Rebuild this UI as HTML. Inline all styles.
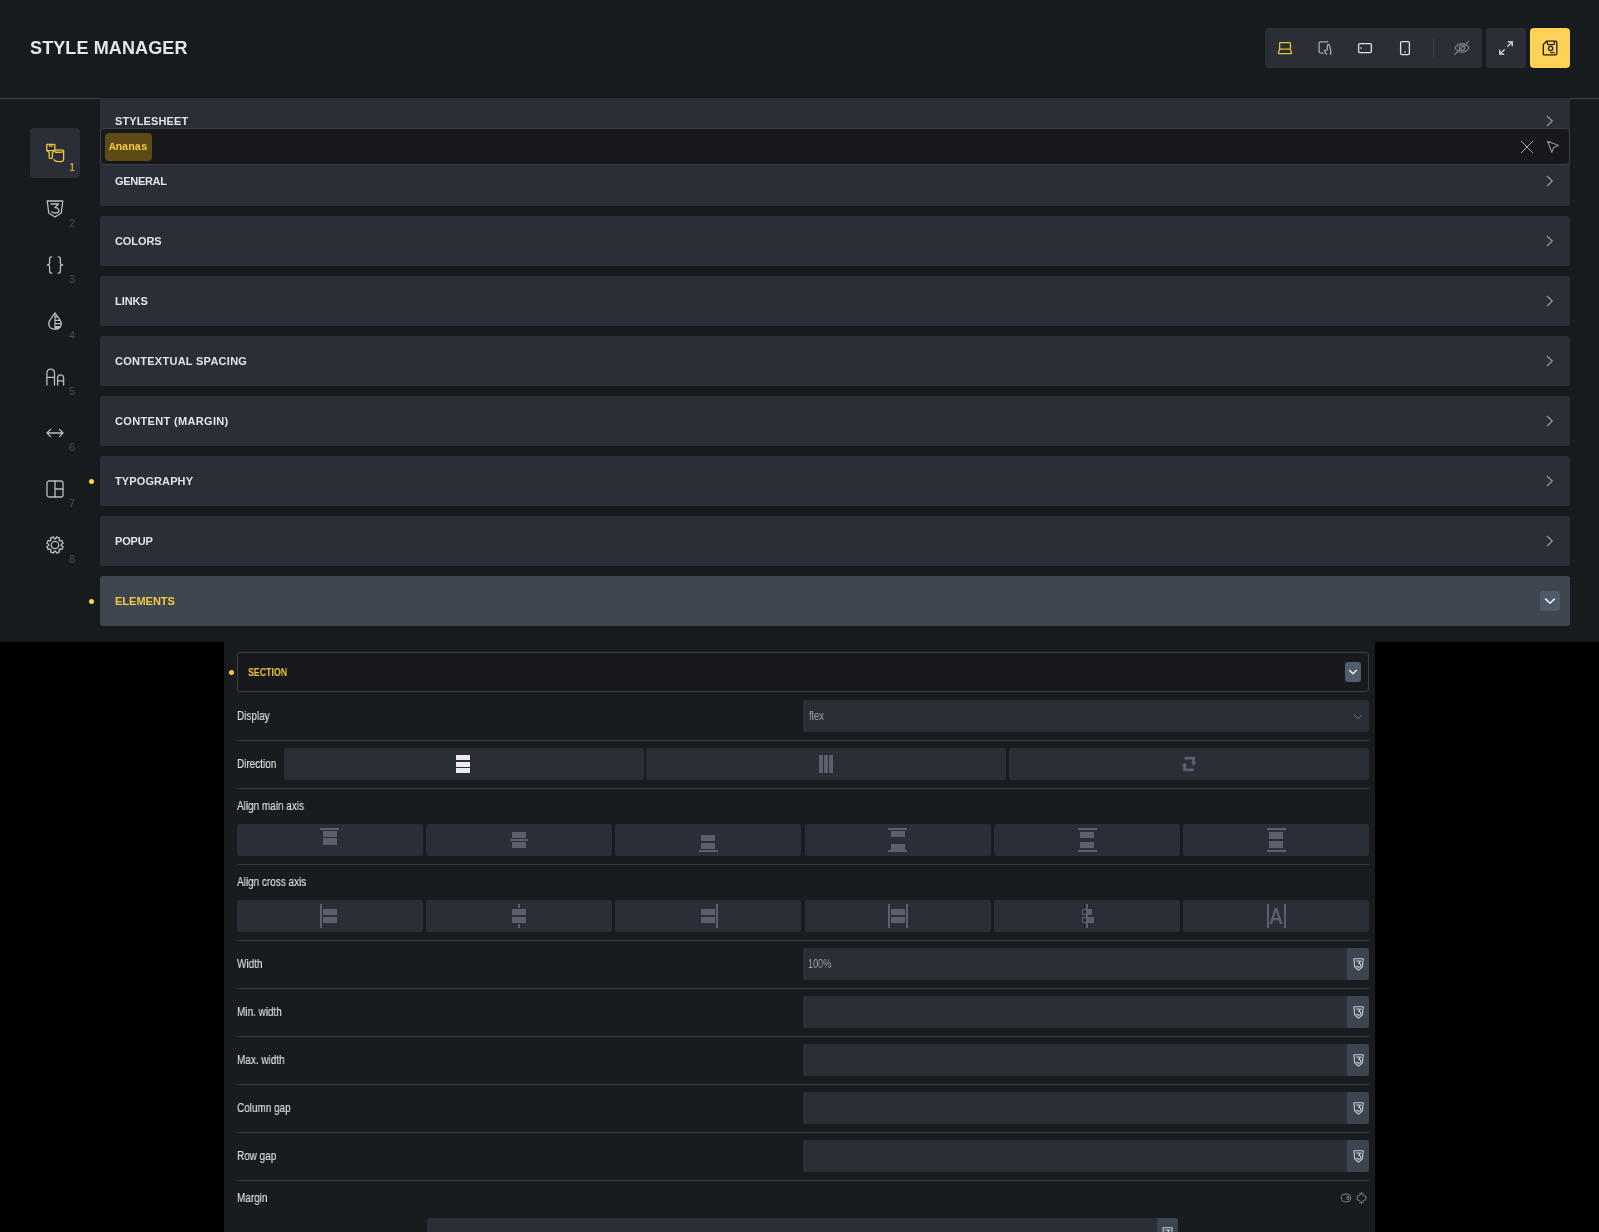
<!DOCTYPE html>
<html><head><meta charset="utf-8">
<style>
*{margin:0;padding:0;box-sizing:border-box}
html,body{width:1599px;height:1232px;overflow:hidden;background:#000;font-family:"Liberation Sans",sans-serif}
.abs{position:absolute}
#title,.lbl,.lab2,.abs{will-change:transform}
#top{position:absolute;left:0;top:0;width:1599px;height:642px;background:#181b1e}
#hdrline{position:absolute;left:0;top:98px;width:100px;height:1px;background:#3b424c}
#title{position:absolute;left:30px;top:36px;font-size:18px;font-weight:bold;color:#e4e6e8;line-height:24px;white-space:nowrap;letter-spacing:0.12px}
.grp{position:absolute;top:28px;height:40px;background:#2a2f37;border-radius:4px}
.ic{position:absolute;overflow:visible}
.row{position:absolute;left:100px;width:1470px;height:50px;background:#2a2f37;border-radius:3px}
.row .lbl{position:absolute;left:15px;top:0;line-height:50px;font-size:11px;font-weight:bold;color:#e2e4e7;white-space:nowrap;letter-spacing:0.15px}
.row svg.chev{position:absolute;left:1446px;top:19px}
.dot{position:absolute;width:5px;height:5px;border-radius:50%;background:#fdd54a}
.sb{position:absolute;left:30px;width:50px;height:50px;border-radius:4px}
.sb .n{position:absolute;left:39px;top:33px;font-size:11px;line-height:12px;color:#474c53}
#lower{position:absolute;left:224px;top:642px;width:1151px;height:590px;background:#191c1f}
.sep{position:absolute;left:12px;width:1133px;height:1px;background:#363b43}
.lab{position:absolute;left:12px;font-size:12px;color:#dcdfe2;white-space:nowrap;transform:scaleX(0.83);transform-origin:0 0;line-height:14px}
.btn{position:absolute;height:32px;background:#2a2f37;border-radius:3px}
.lab2{position:absolute;font-size:12px;color:#dfe2e5;-webkit-text-stroke:0.1px #dfe2e5;white-space:nowrap;transform:scaleX(0.83);transform-origin:0 0;line-height:14px}
.inp{position:absolute;left:579px;width:566px;height:32px;background:#2a2f37;border-radius:3px;overflow:hidden}
.inp .css{position:absolute;right:0;top:0;width:22px;height:32px;background:#3c4550}
</style></head><body>
<div id="top">
  <div id="hdrline"></div>
  <div class="abs" style="left:1570px;top:98px;width:29px;height:1px;background:#3b424c"></div>
  <div class="sb" style="top:128px;background:#2a2f37"></div>
  <svg class="ic" style="left:46px;top:143px" width="18" height="20" viewBox="0 0 18 20" fill="none" stroke="#f0c53c" stroke-width="1.3" stroke-linecap="round" stroke-linejoin="round"><path d="M0.8 1.4 H8.8 V7.6 L6.4 9.6 V14.4 Q6.4 15.4 5.4 15.4 H4.2 Q3.2 15.4 3.2 14.4 V9.6 L0.8 7.6 Z"/><path d="M0.8 7.6 H8.8"/><path d="M3.9 1.4 V3.4 M5.8 1.4 V3.4"/><path d="M9.2 7.2 Q13.6 6.4 17.6 7.4 V16.4 Q17.6 18.6 13 18.6 Q8.2 18.6 8 16.4"/><path d="M9.2 9 Q13.6 9.6 17.6 8.8"/></svg>
  <div class="abs" style="left:69px;top:161px;font-size:11px;line-height:12px;color:#e9c03f">1</div>
  <svg class="ic" style="left:46px;top:200px" width="18" height="18" viewBox="0 0 18 18" fill="none" stroke="#b8bcc1" stroke-width="1.3" stroke-linecap="round" stroke-linejoin="round"><path d="M1.2 1 H16.8 L15.2 13 L9 17 L2.8 13 Z"/><path d="M5 4 H12.6 L8.8 7.6 Q12.8 7.4 12.8 10.4 Q12.8 13 9.2 13 Q7 13 5.8 11.6"/></svg>
  <div class="abs" style="left:69px;top:217px;font-size:11px;line-height:12px;color:#474c53">2</div>
  <svg class="ic" style="left:46px;top:256px" width="18" height="18" viewBox="0 0 18 18" fill="none" stroke="#b8bcc1" stroke-width="1.3" stroke-linecap="round" stroke-linejoin="round"><path d="M5.8 0.8 Q3.6 0.8 3.6 2.8 V7 Q3.6 9 1.4 9 Q3.6 9 3.6 11 V15.2 Q3.6 17.2 5.8 17.2"/><path d="M12.2 0.8 Q14.4 0.8 14.4 2.8 V7 Q14.4 9 16.6 9 Q14.4 9 14.4 11 V15.2 Q14.4 17.2 12.2 17.2"/></svg>
  <div class="abs" style="left:69px;top:273px;font-size:11px;line-height:12px;color:#474c53">3</div>
  <svg class="ic" style="left:46px;top:312px" width="18" height="18" viewBox="0 0 18 18" fill="none" stroke="#b8bcc1" stroke-width="1.3" stroke-linecap="round" stroke-linejoin="round"><path d="M9 0.9 L13.9 7.9 Q16.2 11.2 14.7 14.2 Q13.1 17.2 9 17.2 Q4.9 17.2 3.3 14.2 Q1.8 11.2 4.1 7.9 Z"/><path d="M9 2 V17" stroke-width="1.2"/><path d="M9 4.9 H11.6 M9 8.4 H14 M9 11.6 H15.4" stroke-width="1.1" stroke-linecap="butt"/><path d="M9 14 H15.2 Q14.6 15.8 13 16.6 Q11.4 17.2 9 17.2 Z" fill="#b8bcc1" stroke="none"/></svg>
  <div class="abs" style="left:69px;top:329px;font-size:11px;line-height:12px;color:#474c53">4</div>
  <svg class="ic" style="left:46px;top:368px" width="18" height="18" viewBox="0 0 18 18" fill="none" stroke="#b8bcc1" stroke-width="1.3" stroke-linecap="round" stroke-linejoin="round"><path d="M0.9 17 V5.4 Q0.9 1.1 4.7 1.1 Q8.5 1.1 8.5 5.4 V17 M0.9 9.4 H8.5"/><path d="M11.6 17 V10.2 Q11.6 6.9 14.6 6.9 Q17.6 6.9 17.6 10.2 V17 M11.6 12.8 H17.6"/></svg>
  <div class="abs" style="left:69px;top:385px;font-size:11px;line-height:12px;color:#474c53">5</div>
  <svg class="ic" style="left:46px;top:424px" width="18" height="18" viewBox="0 0 18 18" fill="none" stroke="#b8bcc1" stroke-width="1.3" stroke-linecap="round" stroke-linejoin="round" stroke-width="1.5"><path d="M1 9 H17 M4.6 5.4 L1 9 L4.6 12.6 M13.4 5.4 L17 9 L13.4 12.6"/></svg>
  <div class="abs" style="left:69px;top:441px;font-size:11px;line-height:12px;color:#474c53">6</div>
  <svg class="ic" style="left:46px;top:480px" width="18" height="18" viewBox="0 0 18 18" fill="none" stroke="#b8bcc1" stroke-width="1.3" stroke-linecap="round" stroke-linejoin="round"><rect x="1" y="1" width="16" height="16" rx="2"/><path d="M9 1 V17 M9 9 H17"/></svg>
  <div class="abs" style="left:69px;top:497px;font-size:11px;line-height:12px;color:#474c53">7</div>
  <svg class="ic" style="left:46px;top:536px" width="18" height="18" viewBox="0 0 18 18" fill="none" stroke="#b8bcc1" stroke-width="1.3" stroke-linecap="round" stroke-linejoin="round"><path d="M9.74 2.74 L10.62 0.86 L13.61 2.10 L12.90 4.05 L13.95 5.10 L15.90 4.39 L17.14 7.38 L15.26 8.26 L15.26 9.74 L17.14 10.62 L15.90 13.61 L13.95 12.90 L12.90 13.95 L13.61 15.90 L10.62 17.14 L9.74 15.26 L8.26 15.26 L7.38 17.14 L4.39 15.90 L5.10 13.95 L4.05 12.90 L2.10 13.61 L0.86 10.62 L2.74 9.74 L2.74 8.26 L0.86 7.38 L2.10 4.39 L4.05 5.10 L5.10 4.05 L4.39 2.10 L7.38 0.86 L8.26 2.74 Z"/><circle cx="9" cy="9" r="3.7"/></svg>
  <div class="abs" style="left:69px;top:553px;font-size:11px;line-height:12px;color:#474c53">8</div>
  <div id="title">STYLE MANAGER</div>
  <div class="row" style="top:96px"><span class="lbl" style="letter-spacing:0.12px">STYLESHEET</span><svg class="chev" width="8" height="12" viewBox="0 0 8 12" fill="none" stroke="#8d939a" stroke-width="1.3"><path d="M1 1 L6.2 6 L1 11"/></svg></div>
  <div class="row" style="top:156px"><span class="lbl" style="letter-spacing:-0.3px">GENERAL</span><svg class="chev" width="8" height="12" viewBox="0 0 8 12" fill="none" stroke="#8d939a" stroke-width="1.3"><path d="M1 1 L6.2 6 L1 11"/></svg></div>
  <div class="row" style="top:216px"><span class="lbl" style="letter-spacing:-0.08px">COLORS</span><svg class="chev" width="8" height="12" viewBox="0 0 8 12" fill="none" stroke="#8d939a" stroke-width="1.3"><path d="M1 1 L6.2 6 L1 11"/></svg></div>
  <div class="row" style="top:276px"><span class="lbl" style="letter-spacing:-0.07px">LINKS</span><svg class="chev" width="8" height="12" viewBox="0 0 8 12" fill="none" stroke="#8d939a" stroke-width="1.3"><path d="M1 1 L6.2 6 L1 11"/></svg></div>
  <div class="row" style="top:336px"><span class="lbl" style="letter-spacing:0.27px">CONTEXTUAL SPACING</span><svg class="chev" width="8" height="12" viewBox="0 0 8 12" fill="none" stroke="#8d939a" stroke-width="1.3"><path d="M1 1 L6.2 6 L1 11"/></svg></div>
  <div class="row" style="top:396px"><span class="lbl" style="letter-spacing:0.34px">CONTENT (MARGIN)</span><svg class="chev" width="8" height="12" viewBox="0 0 8 12" fill="none" stroke="#8d939a" stroke-width="1.3"><path d="M1 1 L6.2 6 L1 11"/></svg></div>
  <div class="row" style="top:456px"><span class="lbl" style="letter-spacing:0.11px">TYPOGRAPHY</span><svg class="chev" width="8" height="12" viewBox="0 0 8 12" fill="none" stroke="#8d939a" stroke-width="1.3"><path d="M1 1 L6.2 6 L1 11"/></svg></div>
  <div class="row" style="top:516px"><span class="lbl" style="letter-spacing:-0.15px">POPUP</span><svg class="chev" width="8" height="12" viewBox="0 0 8 12" fill="none" stroke="#8d939a" stroke-width="1.3"><path d="M1 1 L6.2 6 L1 11"/></svg></div>
  <div class="row" style="top:576px;background:#3e4650"><span class="lbl" style="color:#f3c846;letter-spacing:0">ELEMENTS</span>
    <div class="abs" style="left:1440px;top:15px;width:20px;height:20px;border-radius:3px;background:#4e5a67"></div>
    <svg class="abs" style="left:1444px;top:19px" width="12" height="12" viewBox="0 0 12 12" fill="none" stroke="#f2f3f5" stroke-width="1.5"><path d="M1.2 3.6 L6 8.2 L10.8 3.6"/></svg>
  </div>
  <div class="dot" style="left:89px;top:479px"></div>
  <div class="dot" style="left:89px;top:599px"></div>
  <div class="abs" style="left:100px;top:96px;width:1470px;height:2px;background:#181b1e"></div>
  <div class="abs" style="left:100px;top:128px;width:1470px;height:37px;background:#16181b;border:1px solid #3a4049;border-radius:4px"></div>
  <div class="abs" style="left:105px;top:133px;width:47px;height:28px;background:#5e4a16;border-radius:4px"></div>
  <div class="abs" style="left:108.5px;top:132.5px;line-height:28px;font-size:11px;font-family:'Liberation Mono',monospace;font-weight:bold;color:#f4c941;white-space:nowrap;letter-spacing:-0.2px">Ananas</div>
  <svg class="ic" style="left:1520px;top:140px" width="14" height="14" viewBox="0 0 14 14" fill="none" stroke="#a4a9af" stroke-width="1"><path d="M1 1 L13 13 M13 1 L1 13"/></svg>
  <svg class="ic" style="left:1546px;top:140px" width="14" height="14" viewBox="0 0 14 14" fill="none" stroke="#8f959c" stroke-width="1.1" stroke-linejoin="round"><path d="M1.6 1.2 L12.6 5.4 L7.6 7.4 L5.8 12.4 Z"/></svg>

  <div class="grp" style="left:1265px;width:217px"></div>
  <div class="grp" style="left:1486px;width:40px"></div>
  <div class="grp" style="left:1530px;width:40px;background:#fdd257"></div>
  <!-- laptop -->
  <svg class="ic" style="left:1277px;top:40px" width="16" height="16" viewBox="0 0 16 16" fill="none" stroke="#e8bf3c" stroke-width="1.3" stroke-linejoin="round">
    <rect x="2.6" y="2.6" width="10.8" height="6.6" rx="0.8"/>
    <path d="M2.6 9.2 L1.4 13 Q1.3 13.6 1.9 13.6 H14.1 Q14.7 13.6 14.6 13 L13.4 9.2"/>
  </svg>
  <!-- tablet touch -->
  <svg class="ic" style="left:1317px;top:40px" width="16" height="16" viewBox="0 0 16 16" fill="none" stroke="#a3a8ae" stroke-width="1.3" stroke-linejoin="round" stroke-linecap="round">
    <path d="M10.8 1.8 H3.6 Q2.1 1.8 2.1 3.3 V11.6 Q2.1 13.1 3.6 13.1 H6.4"/>
    <path d="M9.6 14.4 L7.7 11.3 Q7.3 10.5 8.2 10.2 L10.4 9.8 V5.4 Q10.4 4.4 11.3 4.4 Q12.2 4.4 12.5 5.4 L13.7 10.4 Q14 11.6 13.6 14.4"/>
  </svg>
  <!-- phone landscape -->
  <svg class="ic" style="left:1357px;top:40px" width="16" height="16" viewBox="0 0 16 16" fill="none" stroke="#dfe1e4" stroke-width="1.3">
    <rect x="1.6" y="3.6" width="12.8" height="9" rx="1.3"/>
    <rect x="3.5" y="7.4" width="1.4" height="1.4" fill="#dfe1e4" stroke="none"/>
  </svg>
  <!-- phone portrait -->
  <svg class="ic" style="left:1397px;top:40px" width="16" height="16" viewBox="0 0 16 16" fill="none" stroke="#dfe1e4" stroke-width="1.3">
    <rect x="3.6" y="1.6" width="8.8" height="13" rx="1.3"/>
    <rect x="7.3" y="11.3" width="1.4" height="1.4" fill="#dfe1e4" stroke="none"/>
  </svg>
  <div class="abs" style="left:1433px;top:38px;width:1px;height:20px;background:#3b414a"></div>
  <!-- eye off -->
  <svg class="ic" style="left:1454px;top:40px" width="16" height="16" viewBox="0 0 16 16" fill="none" stroke="#7c828a" stroke-width="1.2" stroke-linecap="round">
    <path d="M1 8 C4.4 2.2 11.6 2.2 15 8 C11.6 13.8 4.4 13.8 1 8 Z"/>
    <circle cx="8" cy="8" r="2.7"/>
    <path d="M0.6 14.6 L14.6 1.4"/>
  </svg>
  <!-- expand -->
  <svg class="ic" style="left:1498px;top:40px" width="16" height="16" viewBox="0 0 16 16" fill="none" stroke="#eceef0" stroke-width="1.25" stroke-linecap="butt">
    <path d="M2.4 13.6 L6.6 9.4"/><path d="M9.4 6.6 L13.6 2.4"/>
    <path d="M9.8 1.8 H14.2 V6.2"/>
    <path d="M6.2 14.2 H1.8 V9.8"/>
  </svg>
  <!-- save -->
  <svg class="ic" style="left:1542px;top:40px" width="16" height="16" viewBox="0 0 16 16" fill="none" stroke="#1b1a17" stroke-width="1.3" stroke-linejoin="round">
    <path d="M4.4 1.2 H13.8 Q14.8 1.2 14.8 2.2 V13.8 Q14.8 14.8 13.8 14.8 H2.2 Q1.3 14.8 1.3 13.9 V4.6 Z"/>
    <path d="M5.3 1.4 V3.5 Q5.3 4.6 6.4 4.6 H11.3 Q12.4 4.6 12.4 3.5 V1.4"/>
    <circle cx="8.6" cy="8.5" r="2.1"/>
    <path d="M8.2 12.6 H12.7" stroke-width="1.1"/>
  </svg>
</div>
<div id="lower"></div>
<div class="abs" style="left:237px;top:652px;width:1132px;height:40px;border:1px solid #3a3f47;border-radius:3px;background:#17191c"></div>
<div class="abs" style="left:229px;top:670px;width:5px;height:5px;border-radius:50%;background:#f5c842"></div>
<div class="abs" style="left:248px;top:665px;font-size:11px;line-height:14px;font-weight:bold;color:#efc23b;transform:scaleX(0.8);transform-origin:0 0;white-space:nowrap">SECTION</div>
<div class="abs" style="left:1345px;top:662px;width:16px;height:20px;border-radius:3px;background:#505d6c"></div>
<svg class="ic" style="left:1348px;top:667px" width="10" height="10" viewBox="0 0 10 10" fill="none" stroke="#eef0f2" stroke-width="1.4"><path d="M1.2 3 L5 6.8 L8.8 3"/></svg>
<div class="abs" style="left:237px;top:740px;width:1132px;height:1px;background:#363b43"></div>
<div class="abs" style="left:237px;top:788px;width:1132px;height:1px;background:#363b43"></div>
<div class="abs" style="left:237px;top:864px;width:1132px;height:1px;background:#363b43"></div>
<div class="abs" style="left:237px;top:940px;width:1132px;height:1px;background:#363b43"></div>
<div class="abs" style="left:237px;top:988px;width:1132px;height:1px;background:#363b43"></div>
<div class="abs" style="left:237px;top:1036px;width:1132px;height:1px;background:#363b43"></div>
<div class="abs" style="left:237px;top:1084px;width:1132px;height:1px;background:#363b43"></div>
<div class="abs" style="left:237px;top:1132px;width:1132px;height:1px;background:#363b43"></div>
<div class="abs" style="left:237px;top:1180px;width:1132px;height:1px;background:#363b43"></div>
<div class="lab2" style="left:237px;top:709px">Display</div>
<div class="btn" style="left:803px;top:700px;width:566px"></div>
<div class="abs" style="left:808.6px;top:709px;font-size:12px;line-height:14px;color:#a0a5ab;transform:scaleX(0.8);transform-origin:0 0">flex</div>
<svg class="ic" style="left:1353px;top:713px" width="10" height="8" viewBox="0 0 10 8" fill="none" stroke="#6f757c" stroke-width="1"><path d="M1 1.8 L5 5.8 L9 1.8"/></svg>
<div class="lab2" style="left:237px;top:757px">Direction</div>
<div class="btn" style="left:283.5px;top:748px;width:360px"></div>
<div class="btn" style="left:646px;top:748px;width:360px"></div>
<div class="btn" style="left:1009px;top:748px;width:360px"></div>
<div class="abs" style="left:456px;top:755px;width:14px;height:5px;background:#e9ebee"></div><div class="abs" style="left:456px;top:761.5px;width:14px;height:5px;background:#e9ebee"></div><div class="abs" style="left:456px;top:768px;width:14px;height:5px;background:#e9ebee"></div>
<div class="abs" style="left:819px;top:755px;width:4px;height:18px;background:#5a616b"></div><div class="abs" style="left:824px;top:755px;width:4px;height:18px;background:#5a616b"></div><div class="abs" style="left:829px;top:755px;width:4px;height:18px;background:#5a616b"></div>
<svg class="ic" style="left:1181px;top:756px" width="16" height="16" viewBox="0 0 16 16" fill="none" stroke="#5a616b" stroke-width="2.8"><path d="M3.4 2.2 H12.6 V7.2"/><path d="M12.9 13.9 H3.6 V9.4"/><path d="M10 6.6 L15.2 6.6 L12.6 10.2 Z" fill="#5a616b" stroke="none"/><path d="M0.8 10 L6.2 10 L3.5 6.6 Z" fill="#5a616b" stroke="none"/></svg>
<div class="lab2" style="left:237px;top:799px">Align main axis</div>
<div class="btn" style="left:237px;top:824px;width:186px"></div>
<div class="btn" style="left:237px;top:900px;width:186px"></div>
<div class="btn" style="left:426.2px;top:824px;width:186px"></div>
<div class="btn" style="left:426.2px;top:900px;width:186px"></div>
<div class="btn" style="left:615.4px;top:824px;width:186px"></div>
<div class="btn" style="left:615.4px;top:900px;width:186px"></div>
<div class="btn" style="left:804.6px;top:824px;width:186px"></div>
<div class="btn" style="left:804.6px;top:900px;width:186px"></div>
<div class="btn" style="left:993.8px;top:824px;width:186px"></div>
<div class="btn" style="left:993.8px;top:900px;width:186px"></div>
<div class="btn" style="left:1183px;top:824px;width:186px"></div>
<div class="btn" style="left:1183px;top:900px;width:186px"></div>
<div class="abs" style="left:320px;top:828px;width:19px;height:2px;background:#5a616b"></div><div class="abs" style="left:323px;top:831px;width:14px;height:6px;background:#5a616b"></div><div class="abs" style="left:323px;top:838px;width:14px;height:6.5px;background:#5a616b"></div>
<div class="abs" style="left:512px;top:832px;width:14px;height:6px;background:#5a616b"></div><div class="abs" style="left:509.7px;top:839px;width:18.4px;height:2px;background:#5a616b"></div><div class="abs" style="left:512px;top:842px;width:14px;height:6px;background:#5a616b"></div>
<div class="abs" style="left:701px;top:835.3px;width:14px;height:6px;background:#5a616b"></div><div class="abs" style="left:701px;top:843px;width:14px;height:6px;background:#5a616b"></div><div class="abs" style="left:699px;top:850px;width:19px;height:2px;background:#5a616b"></div>
<div class="abs" style="left:888px;top:828px;width:19px;height:1.8px;background:#5a616b"></div><div class="abs" style="left:891px;top:831px;width:14px;height:5.6px;background:#5a616b"></div><div class="abs" style="left:891px;top:844px;width:14px;height:5.6px;background:#5a616b"></div><div class="abs" style="left:888px;top:850.2px;width:19px;height:1.8px;background:#5a616b"></div>
<div class="abs" style="left:1077.5px;top:828px;width:18.5px;height:2px;background:#5a616b"></div><div class="abs" style="left:1080px;top:832px;width:14px;height:6px;background:#5a616b"></div><div class="abs" style="left:1080px;top:842px;width:14px;height:6px;background:#5a616b"></div><div class="abs" style="left:1077.5px;top:850px;width:18.5px;height:2px;background:#5a616b"></div>
<div class="abs" style="left:1267px;top:828px;width:18.6px;height:2px;background:#5a616b"></div><div class="abs" style="left:1269px;top:832px;width:14px;height:6.8px;background:#5a616b"></div><div class="abs" style="left:1269px;top:841px;width:14px;height:6.9px;background:#5a616b"></div><div class="abs" style="left:1267px;top:850px;width:18.6px;height:2px;background:#5a616b"></div>
<div class="lab2" style="left:237px;top:875px">Align cross axis</div>
<div class="abs" style="left:320px;top:904px;width:2px;height:24px;background:#5a616b"></div><div class="abs" style="left:323px;top:909px;width:14px;height:6px;background:#5a616b"></div><div class="abs" style="left:323px;top:917px;width:14px;height:6px;background:#5a616b"></div>
<div class="abs" style="left:518.2px;top:904px;width:1.8px;height:4.3px;background:#5a616b"></div><div class="abs" style="left:518.2px;top:923.8px;width:1.8px;height:4.2px;background:#5a616b"></div><div class="abs" style="left:512px;top:909px;width:14px;height:6px;background:#5a616b"></div><div class="abs" style="left:512px;top:917px;width:14px;height:6px;background:#5a616b"></div>
<div class="abs" style="left:716px;top:904px;width:2px;height:24px;background:#5a616b"></div><div class="abs" style="left:701px;top:909px;width:14px;height:6px;background:#5a616b"></div><div class="abs" style="left:701px;top:917px;width:14px;height:6px;background:#5a616b"></div>
<div class="abs" style="left:888px;top:904px;width:1.8px;height:24px;background:#5a616b"></div><div class="abs" style="left:905.6px;top:904px;width:1.8px;height:24px;background:#5a616b"></div><div class="abs" style="left:891px;top:909px;width:14px;height:6px;background:#5a616b"></div><div class="abs" style="left:891px;top:917px;width:14px;height:6px;background:#5a616b"></div>
<div class="abs" style="left:1086px;top:904px;width:2px;height:24px;background:#5a616b"></div><div class="abs" style="left:1082px;top:909px;width:9.8px;height:6px;border:1.2px solid #5a616b"></div><div class="abs" style="left:1087px;top:909px;width:4.8px;height:6px;background:#5a616b"></div><div class="abs" style="left:1082px;top:917px;width:12px;height:6px;border:1.2px solid #5a616b"></div><div class="abs" style="left:1087px;top:917px;width:7px;height:6px;background:#5a616b"></div>
<div class="abs" style="left:1266.8px;top:904px;width:1.6px;height:24px;background:#5a616b"></div><div class="abs" style="left:1284.2px;top:904px;width:1.8px;height:24px;background:#5a616b"></div><svg class="ic" style="left:1269px;top:907px" width="14" height="18" viewBox="0 0 14 18" fill="#5a616b"><path d="M5.6 1 H8.4 L13.4 17 H10.9 L9.7 13.2 H4.3 L3.1 17 H0.6 Z M5 11 H9 L7 4.4 Z"/></svg>
<div class="lab2" style="left:237px;top:957px">Width</div>
<div class="btn" style="left:803px;top:948px;width:566px;overflow:hidden"><div class="abs" style="right:0;top:0;width:22px;height:32px;background:#3c4550"></div></div>
<svg class="ic" style="left:1353px;top:958px" width="11" height="13" viewBox="0 0 11 13" fill="none" stroke="#c9ccd0" stroke-width="1.1" stroke-linejoin="round" stroke-linecap="round"><path d="M0.8 0.8 H10.2 L9.3 9 L5.5 12.2 L1.7 9 Z"/><path d="M3.2 3 H7.8 L5.4 5.4 Q7.9 5.3 7.9 7.3 Q7.9 9.1 5.6 9.1 Q4.2 9.1 3.5 8.2"/></svg>
<div class="abs" style="left:807.5px;top:957px;font-size:12px;line-height:14px;color:#9ba0a6;transform:scaleX(0.76);transform-origin:0 0">100%</div>
<div class="lab2" style="left:237px;top:1005px">Min. width</div>
<div class="btn" style="left:803px;top:996px;width:566px;overflow:hidden"><div class="abs" style="right:0;top:0;width:22px;height:32px;background:#3c4550"></div></div>
<svg class="ic" style="left:1353px;top:1006px" width="11" height="13" viewBox="0 0 11 13" fill="none" stroke="#c9ccd0" stroke-width="1.1" stroke-linejoin="round" stroke-linecap="round"><path d="M0.8 0.8 H10.2 L9.3 9 L5.5 12.2 L1.7 9 Z"/><path d="M3.2 3 H7.8 L5.4 5.4 Q7.9 5.3 7.9 7.3 Q7.9 9.1 5.6 9.1 Q4.2 9.1 3.5 8.2"/></svg>
<div class="lab2" style="left:237px;top:1053px">Max. width</div>
<div class="btn" style="left:803px;top:1044px;width:566px;overflow:hidden"><div class="abs" style="right:0;top:0;width:22px;height:32px;background:#3c4550"></div></div>
<svg class="ic" style="left:1353px;top:1054px" width="11" height="13" viewBox="0 0 11 13" fill="none" stroke="#c9ccd0" stroke-width="1.1" stroke-linejoin="round" stroke-linecap="round"><path d="M0.8 0.8 H10.2 L9.3 9 L5.5 12.2 L1.7 9 Z"/><path d="M3.2 3 H7.8 L5.4 5.4 Q7.9 5.3 7.9 7.3 Q7.9 9.1 5.6 9.1 Q4.2 9.1 3.5 8.2"/></svg>
<div class="lab2" style="left:237px;top:1101px">Column gap</div>
<div class="btn" style="left:803px;top:1092px;width:566px;overflow:hidden"><div class="abs" style="right:0;top:0;width:22px;height:32px;background:#3c4550"></div></div>
<svg class="ic" style="left:1353px;top:1102px" width="11" height="13" viewBox="0 0 11 13" fill="none" stroke="#c9ccd0" stroke-width="1.1" stroke-linejoin="round" stroke-linecap="round"><path d="M0.8 0.8 H10.2 L9.3 9 L5.5 12.2 L1.7 9 Z"/><path d="M3.2 3 H7.8 L5.4 5.4 Q7.9 5.3 7.9 7.3 Q7.9 9.1 5.6 9.1 Q4.2 9.1 3.5 8.2"/></svg>
<div class="lab2" style="left:237px;top:1149px">Row gap</div>
<div class="btn" style="left:803px;top:1140px;width:566px;overflow:hidden"><div class="abs" style="right:0;top:0;width:22px;height:32px;background:#3c4550"></div></div>
<svg class="ic" style="left:1353px;top:1150px" width="11" height="13" viewBox="0 0 11 13" fill="none" stroke="#c9ccd0" stroke-width="1.1" stroke-linejoin="round" stroke-linecap="round"><path d="M0.8 0.8 H10.2 L9.3 9 L5.5 12.2 L1.7 9 Z"/><path d="M3.2 3 H7.8 L5.4 5.4 Q7.9 5.3 7.9 7.3 Q7.9 9.1 5.6 9.1 Q4.2 9.1 3.5 8.2"/></svg>
<div class="lab2" style="left:237px;top:1191px">Margin</div>
<svg class="ic" style="left:1340px;top:1192px" width="28" height="14" viewBox="0 0 28 14" fill="none" stroke="#6f757c" stroke-width="1.1" stroke-linecap="round"><rect x="1.3" y="2.1" width="9.4" height="7.6" rx="3.8"/><ellipse cx="8" cy="5.9" rx="1" ry="1.5"/><path d="M19.6 3.5 H19.2 Q17 3.5 17 6 Q17 8.5 19.2 8.5 H19.6 M23.4 3.5 H23.8 Q26 3.5 26 6 Q26 8.5 23.8 8.5 H23.4"/><path d="M21.5 0.4 V2.2 M19.7 1.3 L20.4 2.3 M23.3 1.3 L22.6 2.3 M21.5 9.8 V11.6 M19.7 10.7 L20.4 9.7 M23.3 10.7 L22.6 9.7"/></svg>
<div class="btn" style="left:427px;top:1218px;width:751px;height:40px;overflow:hidden"><div class="abs" style="right:0;top:0;width:21px;height:40px;background:#3c4550"></div></div>
<svg class="ic" style="left:1162px;top:1227px" width="11" height="13" viewBox="0 0 11 13" fill="none" stroke="#c9ccd0" stroke-width="1.1" stroke-linejoin="round" stroke-linecap="round"><path d="M0.8 0.8 H10.2 L9.3 9 L5.5 12.2 L1.7 9 Z"/><path d="M3.2 3 H7.8 L5.4 5.4 Q7.9 5.3 7.9 7.3 Q7.9 9.1 5.6 9.1 Q4.2 9.1 3.5 8.2"/></svg>
</body></html>
